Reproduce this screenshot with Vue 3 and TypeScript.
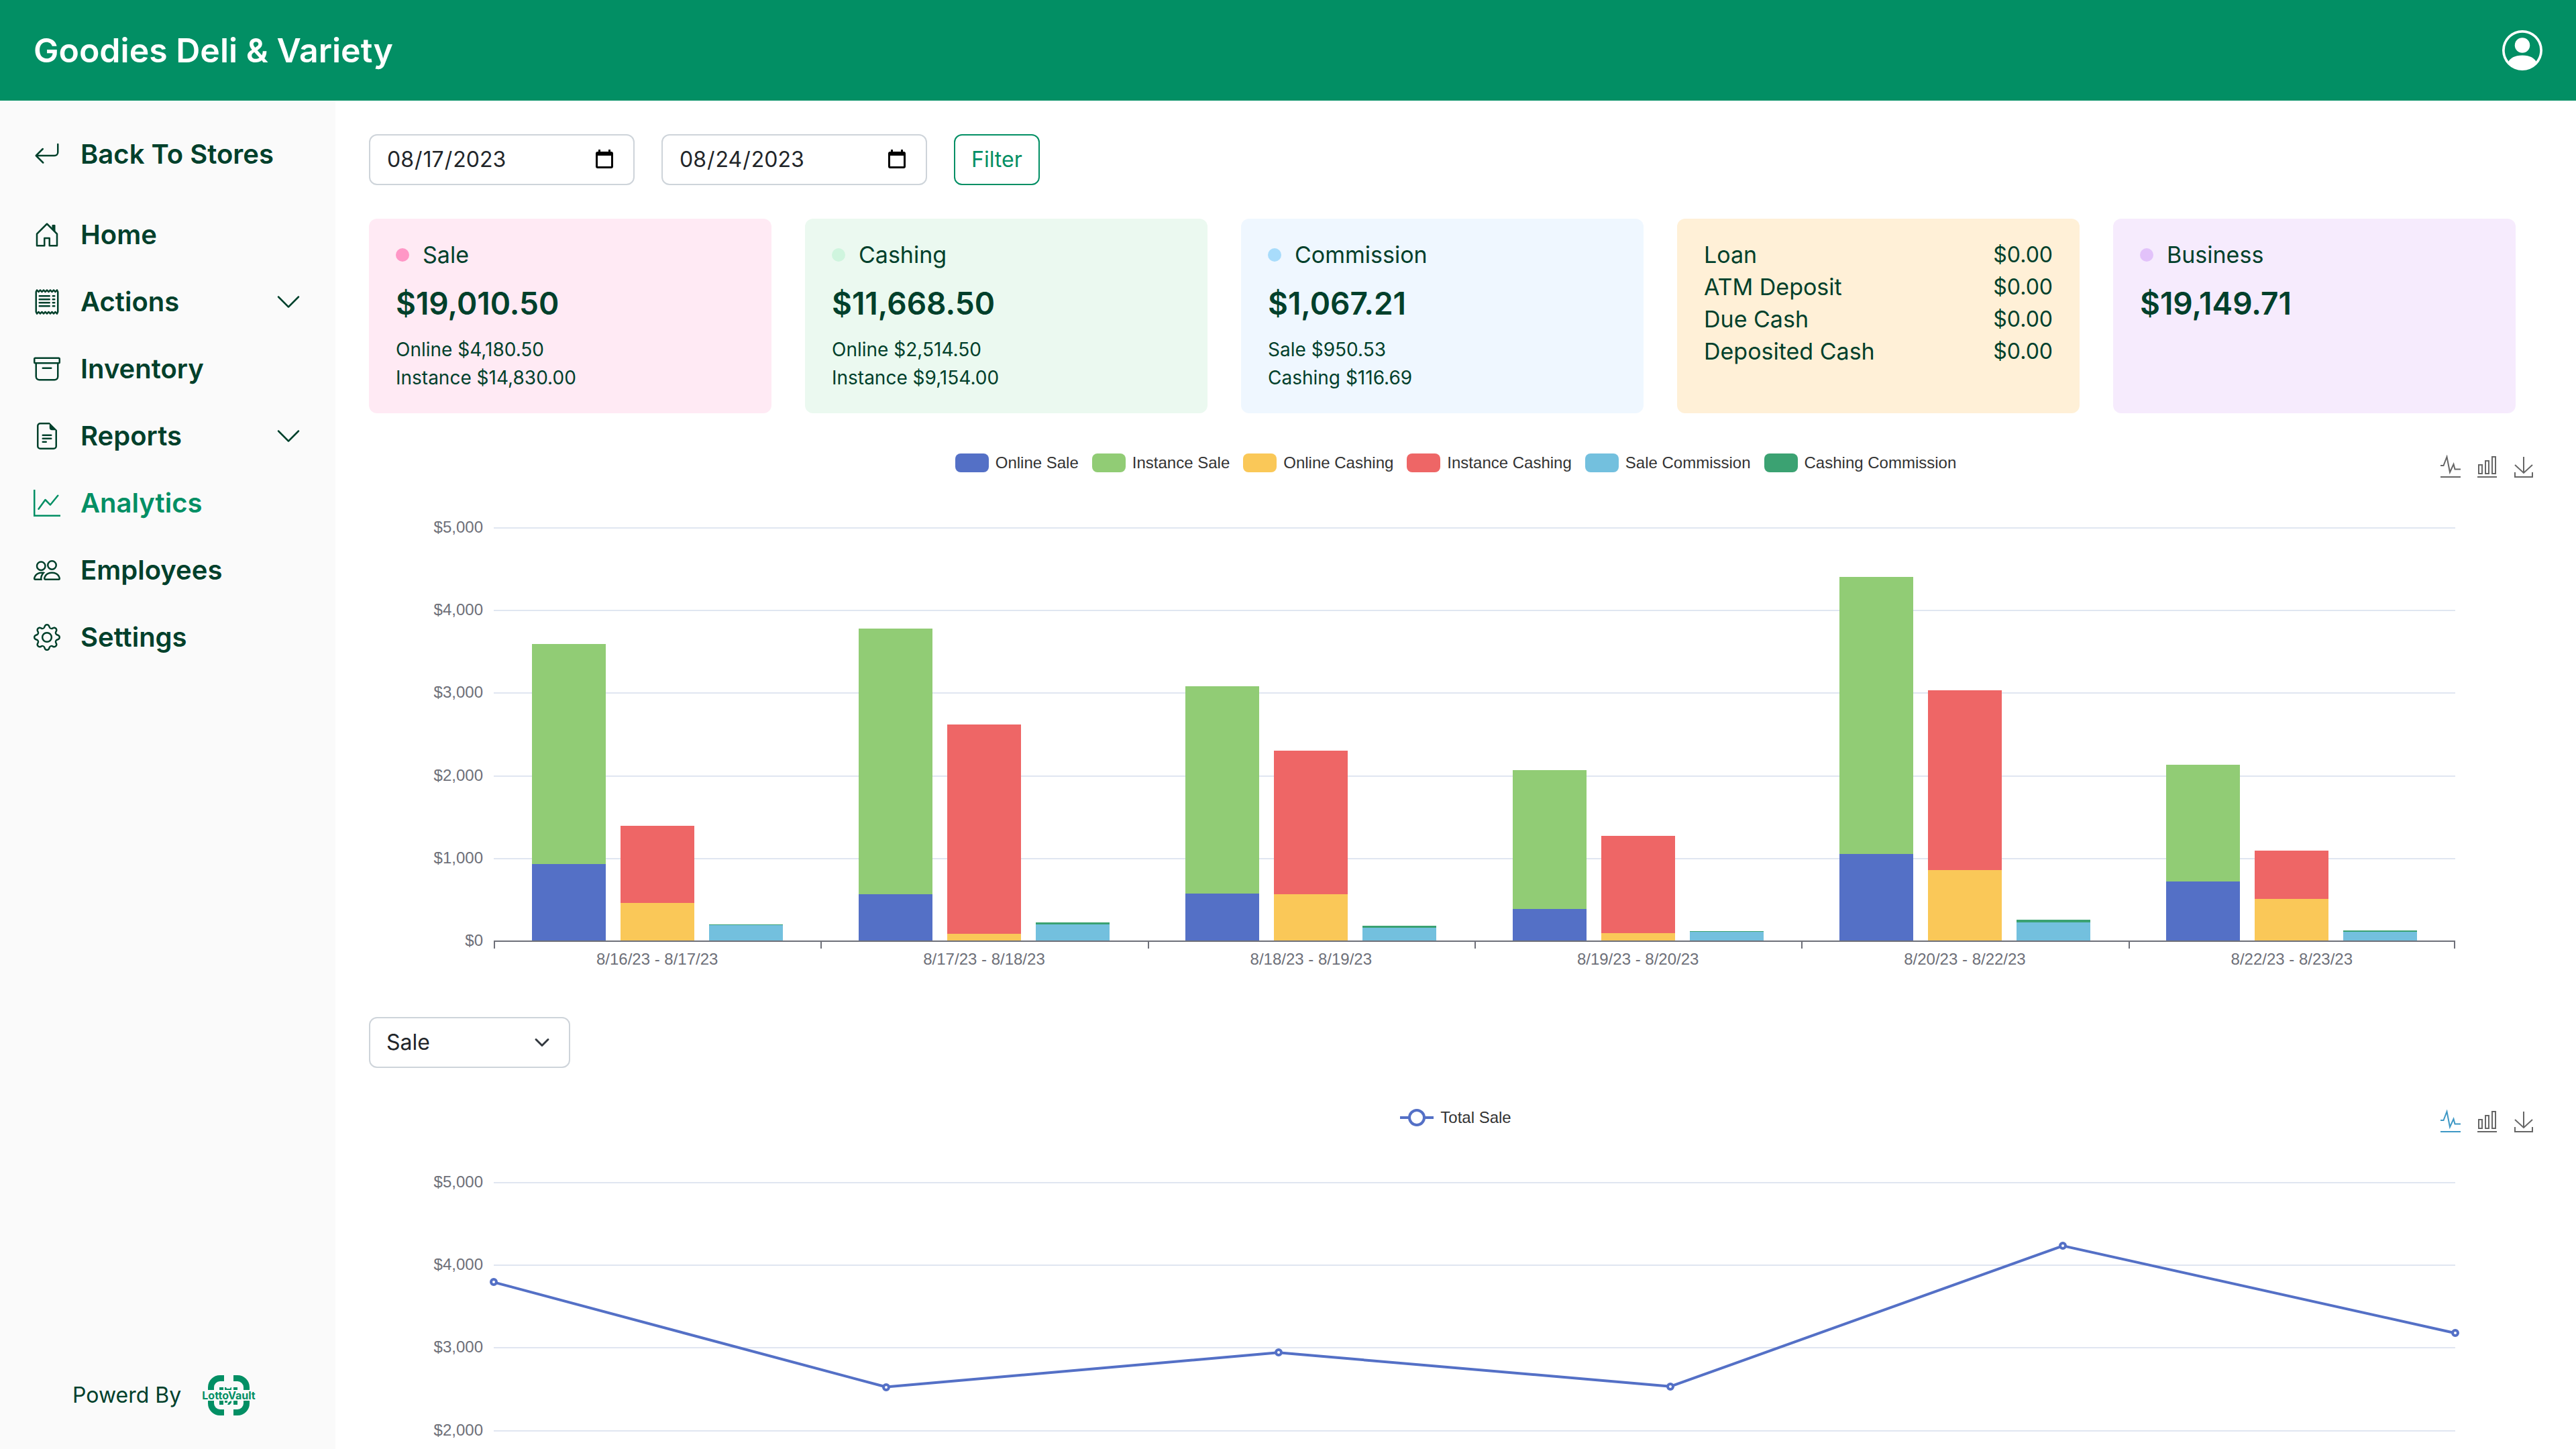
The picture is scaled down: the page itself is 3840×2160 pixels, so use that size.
<script setup lang="ts">
import { computed, ref } from 'vue'

interface NavItem {
  label: string
  paths: string[]
  active?: boolean
  expandable?: boolean
}

interface Summary {
  name: string
  title: string
  total: string
  details: string[]
}

interface Day {
  label: string
  stacks: [number, number][]
}

const navItems: NavItem[] = [
  {
    label: 'Home',
    paths: [
      'M7.646 1.146a.5.5 0 0 1 .708 0l6 6a.5.5 0 0 1 .146.354v7a.5.5 0 0 1-.5.5H9.5a.5.5 0 0 1-.5-.5v-4H7v4a.5.5 0 0 1-.5.5H2a.5.5 0 0 1-.5-.5v-7a.5.5 0 0 1 .146-.354l6-6zM2.5 7.707V14H6v-4a.5.5 0 0 1 .5-.5h3a.5.5 0 0 1 .5.5v4h3.5V7.707L8 2.207l-5.5 5.5z',
      'M13 2.5V6l-2-2V2.5a.5.5 0 0 1 .5-.5h1a.5.5 0 0 1 .5.5z',
    ],
  },
  {
    label: 'Actions',
    expandable: true,
    paths: [
      'M1.92.506a.5.5 0 0 1 .434.14L3 1.293l.646-.647a.5.5 0 0 1 .708 0L5 1.293l.646-.647a.5.5 0 0 1 .708 0L7 1.293l.646-.647a.5.5 0 0 1 .708 0L9 1.293l.646-.647a.5.5 0 0 1 .708 0l.646.647.646-.647a.5.5 0 0 1 .708 0l.646.647.646-.647a.5.5 0 0 1 .801.13l.5 1A.5.5 0 0 1 15 2v12a.5.5 0 0 1-.053.224l-.5 1a.5.5 0 0 1-.8.13L13 14.707l-.646.647a.5.5 0 0 1-.708 0L11 14.707l-.646.647a.5.5 0 0 1-.708 0L9 14.707l-.646.647a.5.5 0 0 1-.708 0L7 14.707l-.646.647a.5.5 0 0 1-.708 0L5 14.707l-.646.647a.5.5 0 0 1-.708 0L3 14.707l-.646.647a.5.5 0 0 1-.801-.13l-.5-1A.5.5 0 0 1 1 14V2a.5.5 0 0 1 .053-.224l.5-1a.5.5 0 0 1 .367-.27zm.217 1.338L2 2.118v11.764l.137.274.51-.51a.5.5 0 0 1 .707 0l.646.647.646-.646a.5.5 0 0 1 .708 0l.646.646.646-.646a.5.5 0 0 1 .708 0l.646.646.646-.646a.5.5 0 0 1 .708 0l.646.646.646-.646a.5.5 0 0 1 .708 0l.646.646.646-.646a.5.5 0 0 1 .708 0l.509.509.137-.274V2.118l-.137-.274-.51.51a.5.5 0 0 1-.707 0L12 1.707l-.646.647a.5.5 0 0 1-.708 0L10 1.707l-.646.647a.5.5 0 0 1-.708 0L8 1.707l-.646.647a.5.5 0 0 1-.708 0L6 1.707l-.646.647a.5.5 0 0 1-.708 0L4 1.707l-.646.647a.5.5 0 0 1-.708 0l-.509-.51z',
      'M3 4.5a.5.5 0 0 1 .5-.5h6a.5.5 0 1 1 0 1h-6a.5.5 0 0 1-.5-.5zm0 2a.5.5 0 0 1 .5-.5h6a.5.5 0 1 1 0 1h-6a.5.5 0 0 1-.5-.5zm0 2a.5.5 0 0 1 .5-.5h6a.5.5 0 1 1 0 1h-6a.5.5 0 0 1-.5-.5zm0 2a.5.5 0 0 1 .5-.5h6a.5.5 0 0 1 0 1h-6a.5.5 0 0 1-.5-.5zm8-6a.5.5 0 0 1 .5-.5h1a.5.5 0 0 1 0 1h-1a.5.5 0 0 1-.5-.5zm0 2a.5.5 0 0 1 .5-.5h1a.5.5 0 0 1 0 1h-1a.5.5 0 0 1-.5-.5zm0 2a.5.5 0 0 1 .5-.5h1a.5.5 0 0 1 0 1h-1a.5.5 0 0 1-.5-.5zm0 2a.5.5 0 0 1 .5-.5h1a.5.5 0 0 1 0 1h-1a.5.5 0 0 1-.5-.5z',
    ],
  },
  {
    label: 'Inventory',
    paths: [
      'M0 2a1 1 0 0 1 1-1h14a1 1 0 0 1 1 1v2a1 1 0 0 1-1 1v7.5a2.5 2.5 0 0 1-2.5 2.5h-9A2.5 2.5 0 0 1 1 12.5V5a1 1 0 0 1-1-1V2zm2 3v7.5A1.5 1.5 0 0 0 3.5 14h9a1.5 1.5 0 0 0 1.5-1.5V5H2zm13-3H1v2h14V2zM5 7.5a.5.5 0 0 1 .5-.5h5a.5.5 0 0 1 0 1h-5a.5.5 0 0 1-.5-.5z',
    ],
  },
  {
    label: 'Reports',
    expandable: true,
    paths: [
      'M5.5 7a.5.5 0 0 0 0 1h5a.5.5 0 0 0 0-1h-5zM5 9.5a.5.5 0 0 1 .5-.5h5a.5.5 0 0 1 0 1h-5a.5.5 0 0 1-.5-.5zm0 2a.5.5 0 0 1 .5-.5h2a.5.5 0 0 1 0 1h-2a.5.5 0 0 1-.5-.5z',
      'M9.5 0H4a2 2 0 0 0-2 2v12a2 2 0 0 0 2 2h8a2 2 0 0 0 2-2V4.5L9.5 0zm0 1v2A1.5 1.5 0 0 0 11 4.5h2V14a1 1 0 0 1-1 1H4a1 1 0 0 1-1-1V2a1 1 0 0 1 1-1h5.5z',
    ],
  },
  {
    label: 'Analytics',
    active: true,
    paths: [
      'M0 0h1v15h15v1H0V0Zm14.817 3.113a.5.5 0 0 1 .07.704l-4.5 5.5a.5.5 0 0 1-.74.037L7.06 6.767l-3.656 5.027a.5.5 0 0 1-.808-.588l4-5.5a.5.5 0 0 1 .758-.06l2.609 2.61 4.15-5.073a.5.5 0 0 1 .704-.07Z',
    ],
  },
  {
    label: 'Employees',
    paths: [
      'M15 14s1 0 1-1-1-4-5-4-5 3-5 4 1 1 1 1h8zm-7.978-1A.261.261 0 0 1 7 12.996c.001-.264.167-1.03.76-1.72C8.312 10.629 9.282 10 11 10c1.717 0 2.687.63 3.24 1.276.593.69.758 1.457.76 1.72l-.008.002a.274.274 0 0 1-.014.002H7.022zM11 7a2 2 0 1 0 0-4 2 2 0 0 0 0 4zm3-2a3 3 0 1 1-6 0 3 3 0 0 1 6 0zM6.936 9.28a5.88 5.88 0 0 0-1.23-.247A7.35 7.35 0 0 0 5 9c-4 0-5 3-5 4 0 .667.333 1 1 1h4.216A2.238 2.238 0 0 1 5 13c0-1.01.377-2.042 1.09-2.904.243-.294.526-.569.846-.816zM4.92 10A5.493 5.493 0 0 0 4 13H1c0-.26.164-1.03.76-1.724.545-.636 1.492-1.256 3.16-1.275zM1.5 5.5a3 3 0 1 1 6 0 3 3 0 0 1-6 0zm3-2a2 2 0 1 0 0 4 2 2 0 0 0 0-4z',
    ],
  },
  {
    label: 'Settings',
    paths: [
      'M8 4.754a3.246 3.246 0 1 0 0 6.492 3.246 3.246 0 0 0 0-6.492zM5.754 8a2.246 2.246 0 1 1 4.492 0 2.246 2.246 0 0 1-4.492 0z',
      'M9.796 1.343c-.527-1.79-3.065-1.79-3.592 0l-.094.319a.873.873 0 0 1-1.255.52l-.292-.16c-1.64-.892-3.433.902-2.54 2.541l.159.292a.873.873 0 0 1-.52 1.255l-.319.094c-1.79.527-1.79 3.065 0 3.592l.319.094a.873.873 0 0 1 .52 1.255l-.16.292c-.892 1.64.901 3.434 2.541 2.54l.292-.159a.873.873 0 0 1 1.255.52l.094.319c.527 1.79 3.065 1.79 3.592 0l.094-.319a.873.873 0 0 1 1.255-.52l.292.16c1.64.893 3.434-.902 2.54-2.541l-.159-.292a.873.873 0 0 1 .52-1.255l.319-.094c1.79-.527 1.79-3.065 0-3.592l-.319-.094a.873.873 0 0 1-.52-1.255l.16-.292c.893-1.64-.902-3.433-2.541-2.54l-.292.159a.873.873 0 0 1-1.255-.52l-.094-.319zm-2.633.283c.246-.835 1.428-.835 1.674 0l.094.319a1.873 1.873 0 0 0 2.693 1.115l.291-.16c.764-.415 1.6.42 1.184 1.185l-.159.292a1.873 1.873 0 0 0 1.116 2.692l.318.094c.835.246.835 1.428 0 1.674l-.319.094a1.873 1.873 0 0 0-1.115 2.693l.16.291c.415.764-.42 1.6-1.185 1.184l-.291-.159a1.873 1.873 0 0 0-2.693 1.116l-.094.318c-.246.835-1.428.835-1.674 0l-.094-.319a1.873 1.873 0 0 0-2.692-1.115l-.292.16c-.764.415-1.6-.42-1.184-1.185l.159-.291A1.873 1.873 0 0 0 1.945 8.93l-.319-.094c-.835-.246-.835-1.428 0-1.674l.319-.094A1.873 1.873 0 0 0 3.06 4.377l-.16-.292c-.415-.764.42-1.6 1.185-1.184l.292.159a1.873 1.873 0 0 0 2.692-1.115l.094-.319z',
    ],
  },
]

const summaries: Summary[] = [
  { name: 'sale', title: 'Sale', total: '$19,010.50', details: ['Online $4,180.50', 'Instance $14,830.00'] },
  { name: 'cashing', title: 'Cashing', total: '$11,668.50', details: ['Online $2,514.50', 'Instance $9,154.00'] },
  { name: 'commission', title: 'Commission', total: '$1,067.21', details: ['Sale $950.53', 'Cashing $116.69'] },
]

const cashRows = ['Loan', 'ATM Deposit', 'Due Cash', 'Deposited Cash']

const legend = [
  { name: 'online-sale', label: 'Online Sale' },
  { name: 'instance-sale', label: 'Instance Sale' },
  { name: 'online-cashing', label: 'Online Cashing' },
  { name: 'instance-cashing', label: 'Instance Cashing' },
  { name: 'sale-commission', label: 'Sale Commission' },
  { name: 'cashing-commission', label: 'Cashing Commission' },
]

// Every stack holds the online part first and the instance part on top of it.
const days: Day[] = [
  { label: '8/16/23 - 8/17/23', stacks: [[922, 2666], [452, 938], [186, 12]] },
  { label: '8/17/23 - 8/18/23', stacks: [[558, 3213], [80, 2532], [192, 28]] },
  { label: '8/18/23 - 8/19/23', stacks: [[569, 2504], [560, 1739], [158, 22]] },
  { label: '8/19/23 - 8/20/23', stacks: [[384, 1675], [92, 1173], [104, 12]] },
  { label: '8/20/23 - 8/22/23', stacks: [[1046, 3352], [851, 2176], [220, 33]] },
  { label: '8/22/23 - 8/23/23', stacks: [[718, 1408], [500, 586], [109, 12]] },
]

const axisMax = 5000
const axisLabels = ['$5,000', '$4,000', '$3,000', '$2,000', '$1,000', '$0']
const share = (value: number) => `${(value / axisMax) * 100}%`

const totalSale = [3788, 2520, 2936, 2527, 4228, 3172]
const linePoints = computed(() =>
  totalSale.map((value, i) => ({
    x: (i / (totalSale.length - 1)) * 100,
    y: (1 - value / axisMax) * 100,
  })),
)
const polyline = computed(() => linePoints.value.map((p) => `${p.x},${p.y}`).join(' '))

const from = ref('2023-08-17')
const to = ref('2023-08-24')
const metric = ref('Sale')

const tools = [
  { name: 'Line', path: 'M0 16H4.5L9.5 3L14 26L19.5 14L21.5 21.5H30M0 33H30' },
  { name: 'Bar', path: 'M2 15H7V28H2ZM12 9H17V28H12ZM22 3H27V28H22ZM0 33H29' },
  { name: 'Save', path: 'M1 15L14 27L27 15M14 27V3M1 26V33H27V26' },
]
</script>

<template>
  <div class="app">
    <header class="topbar">
      <h1>Goodies Deli &amp; Variety</h1>
      <button class="account" type="button" aria-label="Account">
        <svg viewBox="0 0 16 16" fill="currentColor">
          <path d="M11 6a3 3 0 1 1-6 0 3 3 0 0 1 6 0z" />
          <path fill-rule="evenodd" d="M0 8a8 8 0 1 1 16 0A8 8 0 0 1 0 8zm8-7a7 7 0 0 0-5.468 11.37C3.242 11.226 4.805 10 8 10s4.757 1.225 5.468 2.37A7 7 0 0 0 8 1z" />
        </svg>
      </button>
    </header>

    <aside class="sidebar">
      <nav>
        <a class="nav-item back" href="#">
          <svg viewBox="0 0 16 16" fill="currentColor">
            <path d="M14.5 1.5a.5.5 0 0 1 .5.5v4.8a2.5 2.5 0 0 1-2.5 2.5H2.707l3.347 3.346a.5.5 0 0 1-.708.708l-4.2-4.2a.5.5 0 0 1 0-.708l4-4a.5.5 0 1 1 .708.708L2.707 8.3H12.5A1.5 1.5 0 0 0 14 6.8V2a.5.5 0 0 1 .5-.5z" />
          </svg>
          <span>Back To Stores</span>
        </a>
        <a v-for="item in navItems" :key="item.label" class="nav-item" :class="{ active: item.active }" href="#">
          <svg viewBox="0 0 16 16" fill="currentColor" fill-rule="evenodd">
            <path v-for="d in item.paths" :key="d" :d="d" />
          </svg>
          <span>{{ item.label }}</span>
          <svg v-if="item.expandable" viewBox="0 0 16 16" fill="currentColor">
            <path d="M1.646 4.646a.5.5 0 0 1 .708 0L8 10.293l5.646-5.647a.5.5 0 0 1 .708.708l-6 6a.5.5 0 0 1-.708 0l-6-6a.5.5 0 0 1 0-.708z" />
          </svg>
        </a>
      </nav>
      <footer class="powered">
        <span>Powerd By</span>
        <svg class="brand" viewBox="0 0 82 60" role="img" aria-label="LottoVault">
          <g fill="none" stroke="currentColor" stroke-width="9">
            <path d="M14.500 22V18A13.500 13.500 0 0 1 28 4.500H34" />
            <path d="M48 4.500H54A13.500 13.500 0 0 1 67.500 18V22" />
            <path d="M14.500 38V42A13.500 13.500 0 0 0 28 55.500H34" />
            <path d="M48 55.500H54A13.500 13.500 0 0 0 67.500 42V38" />
          </g>
          <path fill="currentColor" d="M27 18h6v4h-6zM35 18h2l1 2h5l1-2h1v4H35zM48 18h6v4h-6zM27 38h6v6h-6zM35 38h4v3h-4zM41 40l4-2v3l-3 3h-3zM48 38h6v6h-6z" />
          <text x="41" y="36" text-anchor="middle" fill="currentColor">LottoVault</text>
        </svg>
      </footer>
    </aside>

    <main class="content">
      <form class="filters" @submit.prevent>
        <input v-model="from" class="control" type="date" aria-label="From date" />
        <input v-model="to" class="control" type="date" aria-label="To date" />
        <button class="filter-button" type="submit">Filter</button>
      </form>

      <section class="cards">
        <article v-for="card in summaries" :key="card.name" class="card" :class="card.name">
          <h2><i class="dot"></i>{{ card.title }}</h2>
          <p class="total">{{ card.total }}</p>
          <p v-for="line in card.details" :key="line" class="detail">{{ line }}</p>
        </article>
        <dl class="card cash">
          <div v-for="row in cashRows" :key="row">
            <dt>{{ row }}</dt>
            <dd>$0.00</dd>
          </div>
        </dl>
        <article class="card business">
          <h2><i class="dot"></i>Business</h2>
          <p class="total">$19,149.71</p>
        </article>
      </section>

      <section class="chart">
        <div class="chart-head">
          <ul class="legend">
            <li v-for="entry in legend" :key="entry.name"><i class="swatch" :class="entry.name"></i>{{ entry.label }}</li>
          </ul>
          <div class="toolbox">
            <button v-for="tool in tools" :key="tool.name" type="button" :aria-label="tool.name">
              <svg viewBox="0 0 30 36"><path :d="tool.path" /></svg>
            </button>
          </div>
        </div>
        <div class="chart-body">
          <div class="y-axis"><span v-for="label in axisLabels" :key="label">{{ label }}</span></div>
          <div class="plot">
            <div class="grid-lines"><i v-for="n in 5" :key="n"></i></div>
            <div class="groups">
              <div v-for="day in days" :key="day.label" class="group">
                <div v-for="(stack, s) in day.stacks" :key="s" class="stack">
                  <i :class="legend[s * 2 + 1].name" :style="{ height: share(stack[1]) }"></i>
                  <i :class="legend[s * 2].name" :style="{ height: share(stack[0]) }"></i>
                </div>
              </div>
            </div>
          </div>
          <div class="x-axis"><span v-for="day in days" :key="day.label">{{ day.label }}</span></div>
        </div>
      </section>

      <select v-model="metric" class="control metric" aria-label="Metric">
        <option>Sale</option>
        <option>Cashing</option>
        <option>Commission</option>
      </select>

      <section class="chart">
        <div class="chart-head">
          <ul class="legend">
            <li><i class="line-mark"></i>Total Sale</li>
          </ul>
          <div class="toolbox">
            <button v-for="tool in tools" :key="tool.name" type="button" :aria-label="tool.name" :class="{ on: tool.name === 'Line' }">
              <svg viewBox="0 0 30 36"><path :d="tool.path" /></svg>
            </button>
          </div>
        </div>
        <div class="chart-body">
          <div class="y-axis"><span v-for="label in axisLabels" :key="label">{{ label }}</span></div>
          <div class="plot">
            <div class="grid-lines"><i v-for="n in 5" :key="n"></i></div>
            <svg class="line" viewBox="0 0 100 100" preserveAspectRatio="none">
              <polyline :points="polyline" vector-effect="non-scaling-stroke" />
            </svg>
            <i v-for="p in linePoints" :key="p.x" class="point" :style="{ left: `${p.x}%`, top: `${p.y}%` }"></i>
          </div>
        </div>
      </section>
    </main>
  </div>
</template>

<style>
html,
body,
#app {
  height: 100%;
}
</style>

<style scoped>
.app {
  --green: #028f64;
  --ink: #00402b;
  --border: #ced4da;
  display: grid;
  grid-template: auto minmax(0, 1fr) / 500px minmax(0, 1fr);
  height: 100%;
  background: #fff;
  color: var(--ink);
  font: 400 32px/48px Inter, sans-serif;
}

.app *,
.app *::before {
  box-sizing: border-box;
}

h1,
h2,
p,
ul,
dl,
dd {
  margin: 0;
  padding: 0;
}

button,
input,
select {
  font: inherit;
}

svg {
  display: block;
}

.topbar {
  grid-column: 1 / -1;
  display: flex;
  align-items: center;
  justify-content: space-between;
  height: 150px;
  padding: 0 50px;
  background: var(--green);
  color: #fff;
}

.topbar h1 {
  font-size: 50px;
  font-weight: 600;
  line-height: 72px;
}

.account {
  padding: 0;
  border: 0;
  background: none;
  color: inherit;
}

.account svg {
  width: 60px;
  height: 60px;
}

.sidebar {
  display: flex;
  flex-direction: column;
  justify-content: space-between;
  padding: 50px;
  background: #fafafa;
}

.nav-item {
  display: flex;
  align-items: center;
  gap: 30px;
  height: 60px;
  margin-bottom: 40px;
  color: inherit;
  font-size: 40px;
  font-weight: 600;
  line-height: 60px;
  text-decoration: none;
}

.nav-item.back {
  margin-bottom: 60px;
}

.nav-item.active {
  color: var(--green);
}

.nav-item svg {
  flex: none;
  width: 40px;
  height: 40px;
}

.nav-item span {
  flex: 1;
}

.powered {
  display: flex;
  align-items: center;
  gap: 30px;
  padding-left: 58px;
}

.brand {
  width: 82px;
  height: 60px;
  color: var(--green);
}

.brand text {
  font: 700 16px Inter, sans-serif;
}

.content {
  padding: 50px 50px 0;
  overflow: hidden auto;
  scrollbar-width: none;
}

.filters {
  display: flex;
  gap: 40px;
  margin-bottom: 50px;
}

.control {
  width: 396px;
  height: 76px;
  padding: 12px 24px;
  border: 2px solid var(--border);
  border-radius: 12px;
  background: #fff;
  color: #212529;
}

.control::-webkit-calendar-picker-indicator {
  width: 36px;
  height: 36px;
  padding: 0;
  background: url('data:image/svg+xml,%3Csvg xmlns="http://www.w3.org/2000/svg" viewBox="0 0 36 36"%3E%3Cpath fill-rule="evenodd" d="M8 3h3v3h12V3h3v3h1a3 3 0 0 1 3 3v19a3 3 0 0 1-3 3H7a3 3 0 0 1-3-3V9a3 3 0 0 1 3-3h1zM7 12v16h20V12z"/%3E%3C/svg%3E') center / contain no-repeat;
}

.filter-button {
  height: 76px;
  padding: 0 24px;
  border: 2px solid var(--green);
  border-radius: 12px;
  background: #fff;
  color: var(--green);
}

.cards {
  display: grid;
  grid-template-columns: repeat(5, minmax(0, 1fr));
  gap: 50px;
  margin-right: 40px;
}

.card {
  min-height: 290px;
  padding: 30px 40px;
  border-radius: 12px;
}

.card h2 {
  display: flex;
  align-items: center;
  gap: 20px;
  font-size: 34px;
  font-weight: 400;
}

.dot {
  width: 20px;
  height: 20px;
  border-radius: 50%;
}

.total {
  margin: 12px 0;
  font-size: 46px;
  font-weight: 600;
  line-height: 72px;
}

.detail {
  font-size: 28px;
  line-height: 42px;
}

.sale { background: #ffeaf4; }
.sale .dot { background: #ff97c6; }
.cashing { background: #ebf9f0; }
.cashing .dot { background: #cff5de; }
.commission { background: #eff7ff; }
.commission .dot { background: #a8dcfb; }
.cash { background: #fff0d7; }
.business { background: #f6ebfd; }
.business .dot { background: #e2c2fa; }

.cash div {
  display: flex;
  justify-content: space-between;
}

.cash dt {
  font-size: 34px;
}

.chart {
  padding-top: 60px;
  color: #6e7079;
  font: 24px/24px "Liberation Sans", sans-serif;
}

.chart-head {
  display: grid;
  grid-template: 28px / 1fr auto 1fr;
  margin-bottom: 82px;
}

.legend {
  grid-column: 2;
  display: flex;
  gap: 20px;
  color: #333;
  line-height: 28px;
  list-style: none;
}

.legend li {
  display: flex;
  align-items: center;
  gap: 10px;
}

.swatch {
  width: 50px;
  height: 28px;
  border-radius: 8px;
}

.line-mark {
  display: flex;
  align-items: center;
  justify-content: center;
  width: 50px;
  height: 28px;
  background: linear-gradient(#5470c6, #5470c6) center / 100% 4px no-repeat;
}

.line-mark::before {
  content: "";
  width: 26px;
  height: 26px;
  border: 4px solid #5470c6;
  border-radius: 50%;
  background: #fff;
}

.toolbox {
  display: flex;
  justify-content: flex-end;
  gap: 25px;
  padding: 2px 12px 0 0;
}

.toolbox button {
  width: 30px;
  height: 36px;
  padding: 0;
  border: 0;
  background: none;
  color: #666;
}

.toolbox button.on {
  color: #3e98c5;
}

.toolbox path {
  fill: none;
  stroke: currentColor;
  stroke-width: 2;
}

.chart-body {
  display: grid;
  grid-template-columns: 186px minmax(0, 1fr);
  margin-right: 130px;
}

.y-axis {
  display: flex;
  flex-direction: column;
  justify-content: space-between;
  height: 640px;
  margin: -12px 16px -12px 0;
  text-align: right;
}

.plot {
  position: relative;
  height: 618px;
  border-bottom: 2px solid #6e7079;
}

.grid-lines {
  position: absolute;
  inset: 0;
  display: flex;
  flex-direction: column;
}

.grid-lines i {
  flex: 1;
  border-top: 2px solid #e0e6f1;
}

.groups {
  position: relative;
  display: flex;
  height: 100%;
}

.group {
  flex: 1;
  display: flex;
  justify-content: center;
  gap: 22px;
}

.stack {
  display: flex;
  flex-direction: column;
  justify-content: flex-end;
  width: 110px;
}

.online-sale { background: #5470c6; }
.instance-sale { background: #91cc75; }
.online-cashing { background: #fac858; }
.instance-cashing { background: #ee6666; }
.sale-commission { background: #73c0de; }
.cashing-commission { background: #3ba272; }

.x-axis {
  grid-column: 2;
  display: flex;
  margin-bottom: 74px;
}

.x-axis span {
  flex: 1;
  padding-top: 14px;
  background: linear-gradient(#6e7079, #6e7079) left top / 2px 10px no-repeat;
  text-align: center;
}

.x-axis span:last-child {
  background:
    linear-gradient(#6e7079, #6e7079) left top / 2px 10px no-repeat,
    linear-gradient(#6e7079, #6e7079) right top / 2px 10px no-repeat;
}

.metric {
  display: block;
  width: 300px;
  appearance: none;
  background: #fff url('data:image/svg+xml,%3Csvg xmlns="http://www.w3.org/2000/svg" viewBox="0 0 16 16"%3E%3Cpath fill="none" stroke="%23343a40" stroke-linecap="round" stroke-linejoin="round" stroke-width="2" d="m2 5 6 6 6-6"/%3E%3C/svg%3E') right 24px center / 32px 24px no-repeat;
}

.line {
  position: absolute;
  inset: 0;
  width: 100%;
  height: 100%;
  overflow: visible;
}

.line polyline {
  fill: none;
  stroke: #5470c6;
  stroke-width: 4;
  stroke-linejoin: round;
}

.point {
  position: absolute;
  width: 12px;
  height: 12px;
  border: 4px solid #5470c6;
  border-radius: 50%;
  background: #fff;
  transform: translate(-50%, -50%);
}
</style>
